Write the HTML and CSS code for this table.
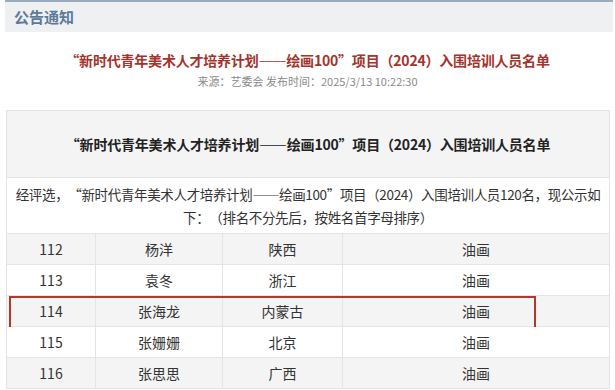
FILE: index.html
```html
<!DOCTYPE html>
<html lang="zh">
<head>
<meta charset="utf-8">
<link rel="stylesheet" href="styles.css">
</head>
<body>
<div class="bar">公告通知</div>
<h1 class="title">“新时代青年美术人才培养计划——绘画100”项目（2024）入围培训人员名单</h1>
<div class="meta">来源：艺委会 发布时间：2025/3/13 10:22:30</div>
<div class="box">
  <div class="box-head">“新时代青年美术人才培养计划——绘画100”项目（2024）入围培训人员名单</div>
  <div class="intro">经评选，“新时代青年美术人才培养计划——绘画100”项目（2024）入围培训人员120名，现公示如下：（排名不分先后，按姓名首字母排序）</div>
  <div class="rows">
    <div class="row odd"><span>112</span><span>杨洋</span><span>陕西</span><span>油画</span></div>
    <div class="row"><span>113</span><span>袁冬</span><span>浙江</span><span>油画</span></div>
    <div class="row odd mark"><span>114</span><span>张海龙</span><span>内蒙古</span><span>油画</span></div>
    <div class="row"><span>115</span><span>张姗姗</span><span>北京</span><span>油画</span></div>
    <div class="row odd"><span>116</span><span>张思思</span><span>广西</span><span>油画</span></div>
  </div>
</div>
</body>
</html>
```
FILE: styles.css
```css
* { box-sizing: border-box; }
body {
  margin: 0;
  background: #fff;
  font-family: "Noto Sans CJK SC", "Liberation Sans", sans-serif;
  color: #333;
}
.bar {
  margin: 0 2px 0 5px;
  height: 32px;
  border-top: 2px solid #9aabbe;
  background: #eff0f2;
  padding-left: 9px;
  font-size: 15px;
  font-weight: bold;
  line-height: 30px;
  color: #5d7a98;
}
.title {
  margin: 18px 0 0;
  text-align: center;
  font-size: 14px;
  line-height: 20px;
  font-weight: bold;
  color: #a3332c;
  letter-spacing: -0.2px;
}
.meta {
  margin-top: 3px;
  text-align: center;
  font-size: 11px;
  line-height: 16px;
  color: #8a8a8a;
}
.box {
  margin: 21px 5px 0 6px;
  border: 1px solid #e4e4e4;
  border-bottom: none;
}
.box-head {
  height: 67px;
  background: #f4f4f4;
  border-bottom: 1px solid #e4e4e4;
  text-align: center;
  font-size: 14px;
  font-weight: bold;
  line-height: 67px;
  color: #222;
  letter-spacing: -0.2px;
}
.intro {
  padding: 5px 2px 4px 2px;
  text-align: center;
  font-size: 13.5px;
  line-height: 23px;
  letter-spacing: -0.35px;
  text-spacing-trim: space-all;
  color: #333;
}
.rows { border-top: 1px solid #e4e4e4; }
.row {
  position: relative;
  display: grid;
  grid-template-columns: 89px 127px 120px 1fr;
  height: 31px;
  border-bottom: 1px solid #e4e4e4;
  background: #fff;
}
.row.odd { background: #f4f4f4; }
.row span {
  text-align: center;
  font-size: 14px;
  line-height: 30px;
  color: #333;
  border-right: 1px solid #e4e4e4;
}
.row span:last-child { border-right: none; }
.mark::after {
  content: "";
  position: absolute;
  left: 2px;
  top: 0;
  width: 523px;
  height: 33px;
  border: 2px solid #b5362c;
}
```
